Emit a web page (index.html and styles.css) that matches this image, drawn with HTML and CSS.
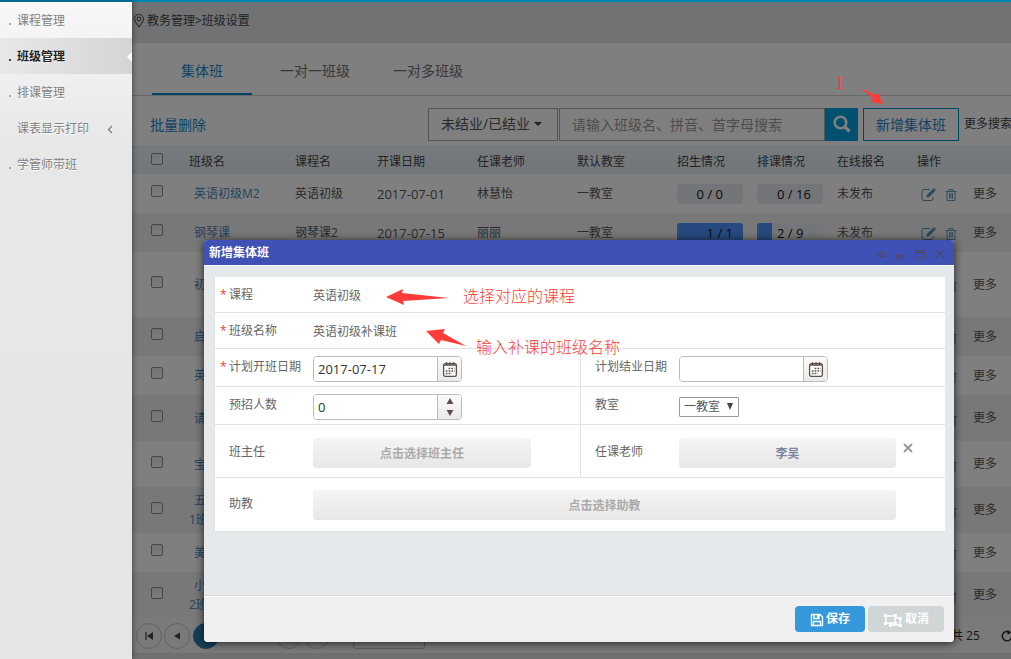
FILE: index.html
```html
<!DOCTYPE html>
<html lang="zh-CN">
<head>
<meta charset="utf-8">
<title>班级设置</title>
<link rel="stylesheet" href="styles.css">
</head>
<body>
<svg class="defs" aria-hidden="true">
  <symbol id="i-edit" viewBox="0 0 16 14"><path d="M9 1.500H3a2 2 0 0 0-2 2v7a2 2 0 0 0 2 2h7a2 2 0 0 0 2-2V9" fill="none" stroke="currentColor"/><path d="M5.500 9.500l.5-2.700L12 1l2 2-5.700 6z" fill="currentColor"/><path d="M12.500 .5l2 2" stroke="currentColor" stroke-width="1.200"/></symbol>
  <symbol id="i-trash" viewBox="0 0 12 14"><path d="M.5 3.500h11M4 3V1.500h4V3M2 3.500v9h8v-9M4.500 5v5.500M6 5v5.500M7.500 5v5.500" fill="none" stroke="currentColor" stroke-width=".9"/></symbol>
  <symbol id="i-cal" viewBox="0 0 16 16"><rect x="1.600" y="2.600" width="12.800" height="12.800" rx="2" fill="#fff" stroke="#5d5048" stroke-width="1.300"/><path d="M2 4h12" stroke="#5d5048" stroke-width="1.300"/><path d="M4.500 1v3M8 1v3M11.500 1v3" stroke="#5d5048" stroke-width="1.200"/><path d="M6.600 7.500h6M3.800 10h9M3.800 12.500h6" stroke="#5d5048" stroke-width="1.600" stroke-dasharray="1.700 1.100"/></symbol>
</svg>
<div class="app">
  <nav class="side">
    <a class="item" href="#">课程管理</a>
    <a class="item active" href="#">班级管理</a>
    <a class="item" href="#">排课管理</a>
    <a class="item plain" href="#">课表显示打印<svg class="chev" viewBox="0 0 6 8"><path d="M5 .5L1.500 4 5 7.500" fill="none" stroke="#777" stroke-width="1.200"/></svg></a>
    <a class="item" href="#">学管师带班</a>
  </nav>
  <main class="main">
    <header class="crumb"><svg class="pin" viewBox="0 0 12 16"><path d="M6 14C4 11 1.500 9 1.500 6a4.500 4.500 0 0 1 9 0c0 3-2.500 5-4.500 8z" fill="none" stroke="#666" stroke-width="1.200"/><circle cx="6" cy="6" r="1.800" fill="none" stroke="#666" stroke-width="1.200"/></svg><span>教务管理&gt;班级设置</span></header>
    <section class="panel">
      <div class="tabs">
        <button class="tab on">集体班</button><button class="tab">一对一班级</button><button class="tab">一对多班级</button>
      </div>
      <div class="tools">
        <a class="bulk" href="#">批量删除</a>
        <button class="state">未结业/已结业<i class="caret"></i></button>
        <input class="query" type="text" aria-label="搜索" placeholder="请输入班级名、拼音、首字母搜索">
        <button class="find" aria-label="搜索"><svg viewBox="0 0 18 18"><circle cx="7.500" cy="7.500" r="5.800" fill="none" stroke="#fff" stroke-width="2.600"/><path d="M12 12l4.500 4.500" stroke="#fff" stroke-width="3.200"/></svg></button>
        <button class="add">新增集体班</button>
        <a class="moresearch" href="#">更多搜索</a>
      </div>
      <table class="grid">
        <colgroup><col class="c-check"><col class="c-name"><col class="c-course"><col class="c-wide"><col class="c-wide"><col class="c-wide"><col class="c-bar"><col class="c-bar"><col class="c-bar"><col></colgroup>
        <thead><tr><th><input type="checkbox" aria-label="全选"></th><th>班级名</th><th>课程名</th><th>开课日期</th><th>任课老师</th><th>默认教室</th><th>招生情况</th><th>排课情况</th><th>在线报名</th><th>操作</th></tr></thead>
        <tbody>
          <tr><td><input type="checkbox" aria-label="选择"></td><td><a class="name" href="#">英语初级M2</a></td><td>英语初级</td><td class="date">2017-07-01</td><td>林慧怡</td><td>一教室</td><td><div class="bar">0 / 0</div></td><td><div class="bar">0 / 16</div></td><td>未发布</td><td><div class="ops"><svg class="edit"><use href="#i-edit"/></svg><svg class="trash"><use href="#i-trash"/></svg><a href="#">更多</a></div></td></tr>
          <tr><td><input type="checkbox" aria-label="选择"></td><td><a class="name" href="#">钢琴课</a></td><td>钢琴课2</td><td class="date">2017-07-15</td><td>丽丽</td><td>一教室</td><td><div class="bar full">1 / 1</div></td><td><div class="bar part">2 / 9</div></td><td>未发布</td><td><div class="ops"><svg class="edit"><use href="#i-edit"/></svg><svg class="trash"><use href="#i-trash"/></svg><a href="#">更多</a></div></td></tr>
          <tr class="xl"><td><input type="checkbox" aria-label="选择"></td><td><a class="name" href="#">初</a></td><td colspan="7"></td><td><div class="ops"><svg class="edit"><use href="#i-edit"/></svg><svg class="trash"><use href="#i-trash"/></svg><a href="#">更多</a></div></td></tr>
          <tr><td><input type="checkbox" aria-label="选择"></td><td><a class="name" href="#">启</a></td><td colspan="7"></td><td><div class="ops"><svg class="edit"><use href="#i-edit"/></svg><svg class="trash"><use href="#i-trash"/></svg><a href="#">更多</a></div></td></tr>
          <tr><td><input type="checkbox" aria-label="选择"></td><td><a class="name" href="#">英</a></td><td colspan="7"></td><td><div class="ops"><svg class="edit"><use href="#i-edit"/></svg><svg class="trash"><use href="#i-trash"/></svg><a href="#">更多</a></div></td></tr>
          <tr class="lg"><td><input type="checkbox" aria-label="选择"></td><td><a class="name" href="#">请</a></td><td colspan="7"></td><td><div class="ops"><svg class="edit"><use href="#i-edit"/></svg><svg class="trash"><use href="#i-trash"/></svg><a href="#">更多</a></div></td></tr>
          <tr class="lg"><td><input type="checkbox" aria-label="选择"></td><td><a class="name" href="#">宝</a></td><td colspan="7"></td><td><div class="ops"><svg class="edit"><use href="#i-edit"/></svg><svg class="trash"><use href="#i-trash"/></svg><a href="#">更多</a></div></td></tr>
          <tr class="lg"><td><input type="checkbox" aria-label="选择"></td><td><a class="name" href="#">五<br>1班</a></td><td colspan="7"></td><td><div class="ops"><svg class="edit"><use href="#i-edit"/></svg><svg class="trash"><use href="#i-trash"/></svg><a href="#">更多</a></div></td></tr>
          <tr><td><input type="checkbox" aria-label="选择"></td><td><a class="name" href="#">美</a></td><td colspan="7"></td><td><div class="ops"><svg class="edit"><use href="#i-edit"/></svg><svg class="trash"><use href="#i-trash"/></svg><a href="#">更多</a></div></td></tr>
          <tr class="lg"><td><input type="checkbox" aria-label="选择"></td><td><a class="name" href="#">小<br>2班</a></td><td colspan="7"></td><td><div class="ops"><svg class="edit"><use href="#i-edit"/></svg><svg class="trash"><use href="#i-trash"/></svg><a href="#">更多</a></div></td></tr>
        </tbody>
      </table>
      <div class="pager">
        <button class="pg" aria-label="首页"><svg viewBox="0 0 8 8"><path d="M1 0v8" stroke="#444" stroke-width="1.200"/><path d="M8 0v8L2 4z" fill="#444"/></svg></button>
        <button class="pg" aria-label="上一页"><svg viewBox="0 0 8 8"><path d="M7 .5v7L1 4z" fill="#444"/></svg></button>
        <button class="pg cur" aria-label="第一页"></button>
        <button class="pg next" aria-label="下一页"></button>
        <button class="pg" aria-label="末页"></button>
        <button class="size" aria-label="每页条数"></button>
        <span class="total">共 25</span>
        <svg class="reload" viewBox="0 0 12 12"><path d="M9 2.500A4.700 4.700 0 1 0 10.700 6" fill="none" stroke="#333" stroke-width="1.500"/><path d="M6.500 0l4 2.500-4 2.500z" fill="#333"/></svg>
      </div>
    </section>
    <div class="shade"></div>
  </main>
</div>

<section class="dialog" role="dialog" aria-labelledby="dlg-title">
  <header class="dhead"><h1 id="dlg-title">新增集体班</h1>
    <svg class="wins" viewBox="0 0 74 12" fill="none" stroke="#4e4a66" stroke-width="1.100"><path d="M2 6.500h4M6 3v7M6 4.500h4M6 8.500h4M10.500 4v5"/><path d="M22 7.500h8M22 9.500h8" stroke-width="1.500"/><rect x="41.500" y="2.500" width="9" height="7.500" rx="1"/><path d="M42 4.500h8"/><path d="M62 2l8 8M70 2l-8 8"/></svg>
  </header>
  <form class="dbody">
    <div class="form">
      <div class="row"><div class="cell"><span class="label req">课程</span><span>英语初级</span></div></div>
      <div class="row"><div class="cell"><span class="label req">班级名称</span><span>英语初级补课班</span></div></div>
      <div class="row two">
        <div class="cell"><label class="label req" for="start">计划开班日期</label><div class="field"><input id="start" type="text" value="2017-07-17"><button type="button" aria-label="选择日期"><svg class="cal"><use href="#i-cal"/></svg></button></div></div>
        <div class="cell"><label class="label" for="end">计划结业日期</label><div class="field"><input id="end" type="text"><button type="button" aria-label="选择日期"><svg class="cal"><use href="#i-cal"/></svg></button></div></div>
      </div>
      <div class="row two">
        <div class="cell"><label class="label" for="count">预招人数</label><div class="field"><input id="count" type="text" value="0"><button type="button" aria-label="调整人数"><svg class="spin" viewBox="0 0 8 18"><path d="M4 0l3.500 6h-7zM4 18l3.500-6h-7z" fill="#5d5048"/></svg></button></div></div>
        <div class="cell"><label class="label" for="room">教室</label><div class="pick"><select id="room"><option>一教室</option></select><i class="down"></i></div></div>
      </div>
      <div class="row two tall">
        <div class="cell"><span class="label">班主任</span><button type="button" class="choose">点击选择班主任</button></div>
        <div class="cell"><span class="label">任课老师</span><button type="button" class="choose chosen">李吴</button><button type="button" class="clear" aria-label="清除"><svg viewBox="0 0 10 10"><path d="M1 1l8 8M9 1L1 9" stroke="#999" stroke-width="1.900"/></svg></button></div>
      </div>
      <div class="row tall"><div class="cell"><span class="label">助教</span><button type="button" class="choose">点击选择助教</button></div></div>
    </div>
  </form>
  <footer class="dfoot">
    <button class="btn save"><svg viewBox="0 0 14 14"><path d="M1.500 1.500H10L12.500 4v8.500h-11zM4 2v3.500h5V2M3.500 12V8.500h7V12" fill="none" stroke="#fff" stroke-width="1.300"/><path d="M7 2h2v3H7z" fill="#fff"/></svg>保存</button>
    <button class="btn cancel"><svg class="group" viewBox="0 0 20 15"><path d="M3 3h9v7H3zM12 5h5v7H7v-2" fill="none" stroke="#fff" stroke-width="1.400"/><path d="M1 1h3v3H1zM11 1h3v3h-3zM1 9h3v3H1zM11 9h3v3h-3zM16 4h3v3h-3zM16 11h3v3h-3zM6 11h3v3H6z" fill="#fff"/></svg>取消</button>
  </footer>
</section>

<div class="note n1">1</div>
<div class="note n2">选择对应的课程</div>
<div class="note n3">输入补课的班级名称</div>
<svg class="arrow a1" viewBox="0 0 24 17"><path d="M1 0l14 7 3-2 5 11-12-2 2-3z" fill="#fd3b38"/></svg>
<svg class="arrow a2" viewBox="0 0 63 16"><path d="M0 8L17 0l-1 4 47 5-46 3 1 4z" fill="#fd3b38"/></svg>
<svg class="arrow a3" viewBox="0 0 40 18"><path d="M0 2L19 0l-2 4 23 13-25-6-2 4z" fill="#fd3b38"/></svg>
</body>
</html>
```
FILE: styles.css
```css
* { box-sizing: border-box; }
body { margin: 0; font: 12px/18px "Open Sans", "Noto Sans CJK SC", sans-serif; color: #555; }
button, input, select { font: inherit; color: inherit; margin: 0; padding: 0; }
button { border: 0; background: none; }
a { color: inherit; text-decoration: none; }
.defs { display: none; }
.app { display: flex; height: 100vh; overflow: hidden; }

.side { flex: 0 0 132px; z-index: 1; border-top: 2px solid #006a91; background: linear-gradient(#f8f8f8, #e8e7e7 150px, #e6e5e5); box-shadow: 1px 0 5px rgba(0,0,0,.4); }
.item { position: relative; display: flex; align-items: center; height: 36px; padding: 2px 0 0 8px; color: #808080; text-shadow: 0 1px #fff; }
.item::before { content: ""; width: 2px; height: 2px; margin: 5px 6px 0 1px; background: #aaa; }
.item.plain::before { background: none; }
.active { color: #222; font-weight: bold; background: linear-gradient(90deg, #e9e8e8, #d5d5d5); }
.item.active::before { background: #444; }
.active::after { content: ""; position: absolute; right: 0; top: 14px; border: 5px solid transparent; border-left: 0; border-right-color: #fff; }
.chev { width: 6px; height: 9px; margin-left: 18px; }

.main { position: relative; flex: 1; min-width: 0; overflow: hidden; border-top: 2px solid #0086b5; background: #dfe1e4; }
.shade { position: absolute; inset: 0; background: rgba(0,0,0,.5); }
.crumb { display: flex; align-items: center; gap: 2px; height: 41px; padding: 0 0 4px 1px; background: #e3e5e8; color: #444; }
.pin { width: 12px; height: 16px; }
.panel { border-radius: 4px 0 0; background: #fff; border-bottom: 1px solid #ddd; }
.tabs { display: flex; gap: 13px; height: 53px; padding-left: 20px; border-bottom: 1px solid #d0d0d0; }
.tab { width: 100px; font-size: 14px; color: #707070; border-bottom: 2px solid transparent; border-top: 6px solid transparent; }
.on { color: #2087cc; border-bottom-color: #0088cc; }
.tools { display: flex; align-items: center; height: 50px; padding: 6px 0 0 18px; white-space: nowrap; font-size: 14px; overflow: hidden; }
.tools > * { flex-shrink: 0; }
.bulk { color: #2087cc; width: 278px; padding-top: 2px; }
.state { width: 130px; height: 33px; padding-right: 3px; border: 1px solid #aaa; }
.caret { display: inline-block; margin-left: 4px; vertical-align: 3px; border: 4px solid transparent; border-top-color: #444; border-bottom: 0; }
.query { width: 266px; height: 33px; margin-left: 1px; padding-left: 12px; border: 1px solid #aaa; background: #fff; }
.query::placeholder { color: #999; opacity: 1; }
.find { display: flex; align-items: center; justify-content: center; width: 33px; height: 33px; background: #00a0e0; }
.find svg { width: 18px; height: 18px; }
.add { width: 96px; height: 33px; margin: 0 5px; padding-top: 2px; border: 1px solid #0090d0; color: #2087cc; }
.moresearch { font-size: 12px; color: #444; }

.grid { width: 100%; table-layout: fixed; border-spacing: 0; }
.c-check { width: 50px; } .c-name { width: 106px; } .c-course { width: 82px; } .c-wide { width: 100px; } .c-bar { width: 80px; }
th, td { padding: 0 0 0 7px; text-align: left; vertical-align: middle; white-space: nowrap; }
th { height: 28px; padding-top: 2px; font-weight: normal; background: linear-gradient(#edf4f8, #e9eff5); border-top: 1px solid #dde3e8; color: #444; }
td { height: 39px; }
.xl td { height: 65px; } .lg td { height: 46px; }
tbody tr:nth-child(even) { background: #f0f0f0; }
.grid input { appearance: none; display: block; width: 12px; height: 12px; margin: 0 0 5px 12px; border: 1px solid #8c8c8c; border-radius: 2px; background: linear-gradient(#e8e8e8, #f8f8f8); }
.name { display: block; text-indent: 5px; color: #4a86b8; line-height: 19px; }
.date { font-size: 13px; }
.bar { width: 66px; height: 20px; padding-left: 20px; border-radius: 3px; background: #e8ebf0; font-size: 13px; line-height: 20px; color: #111; }
td:nth-child(7) .bar { text-align: right; padding: 0 20px 0 0; }
td:nth-child(7) .full { padding-right: 10px; }
.full { background: #4d94ff; }
.part { background: linear-gradient(90deg, #4d94ff 15px, #e8ebf0 15px); }
.ops { display: flex; align-items: center; padding-left: 4px; color: #5090b8; }
.ops a { margin-left: 16px; color: #555; }
.edit { width: 16px; height: 14px; margin-top: 2px; } .trash { width: 12px; height: 14px; margin: 3px 0 0 8px; }

.pager { display: flex; align-items: center; gap: 2px; height: 35px; padding-left: 4px; background: #f4f4f4; }
.pg { display: flex; flex: 0 0 26px; height: 26px; align-items: center; justify-content: center; border: 1px solid #c5c5c5; border-radius: 50%; }
.pg svg { width: 8px; height: 8px; }
.cur { background: #2a80b0; border-color: #2a80b0; margin-left: 1px; }
.next { margin-left: 55px; }
.size { flex: 0 0 72px; height: 26px; margin-left: 21px; border: 1px solid #bbb; border-radius: 3px; }
.total { margin-left: auto; width: 48px; font-size: 12px; white-space: nowrap; color: #333; }
.reload { width: 12px; height: 12px; margin-right: -2px; }

.dialog { position: absolute; z-index: 2; left: 204px; top: 240px; width: 750px; display: flex; flex-direction: column; border-radius: 4px; overflow: hidden; background: #e5e9eb; color: #666; box-shadow: 0 1px 8px rgba(0,0,0,.75); }
.dhead { display: flex; align-items: center; justify-content: space-between; height: 26px; padding: 0 6px 0 5px; background: #3f51b5; border-bottom: 1px solid #fff; }
.dhead h1 { margin: 0; font-size: 12px; line-height: 24px; color: #fff; font-weight: bold; }
.wins { width: 74px; height: 12px; margin-top: 2px; }
.dbody { min-height: 329px; padding: 11px 9px 0 10px; }
.form { background: #fff; border-bottom: 1px solid #e2e2e2; border-left: 1px solid #e2e2e2; }
.row { display: grid; border-bottom: 1px solid #e2e2e2; min-height: 36px; }
.row:last-child { border-bottom: 0; }
.two { grid-template-columns: 1fr 1fr; min-height: 38px; }
.two .cell + .cell { border-left: 1px solid #e2e2e2; }
.tall { min-height: 53px; }
.cell { display: flex; align-items: center; padding: 2px 49px 0 0; }
.two .cell { padding-right: 49px; }
.two.tall .cell { padding-top: 4px; }
.row:last-child .cell { padding-top: 0; }
.label { position: relative; flex: 0 0 98px; padding: 0 0 2px 14px; }
.two .label { padding-bottom: 3px; }
.req::before { content: "*"; position: absolute; left: 5px; color: #f33; }
.field { display: flex; width: 149px; height: 26px; border: 1px solid #bbb; border-radius: 4px; overflow: hidden; }
.field input { flex: 1; min-width: 0; padding-left: 4px; border: 0; font-size: 13px; color: #333; }
.field button { display: flex; align-items: center; justify-content: center; width: 24px; border-left: 1px solid #bbb; background: linear-gradient(#fafafa, #eaeaea); }
.cal { width: 16px; height: 16px; }
.spin { width: 8px; height: 18px; }
.pick { position: relative; }
.pick select { appearance: none; display: block; width: 60px; height: 20px; padding-left: 4px; border: 1px solid #999; border-radius: 1px; background: #fff; color: #555; }
.down { position: absolute; right: 6px; top: 6px; border: 3px solid transparent; border-top: 7px solid #444; border-bottom: 0; pointer-events: none; }
.choose { flex: 1; height: 30px; padding-top: 2px; border-radius: 4px; background: linear-gradient(#f5f5f5, #e7e7e7); font-weight: bold; color: #aaa; }
.chosen { color: #7b86a0; }
.clear { width: 10px; height: 10px; margin: 0 -17px 10px 7px; line-height: 0; }
.clear svg { width: 10px; height: 10px; }
.dfoot { display: flex; justify-content: flex-end; gap: 3px; padding: 10px 10px 10px; border-top: 1px solid #d9d9d9; background: #f0f0f0; box-shadow: inset 0 1px #fff; }
.btn { display: flex; align-items: center; justify-content: center; gap: 2px; width: 70px; height: 26px; border-radius: 4px; color: #fff; font-weight: bold; }
.btn svg { width: 14px; height: 14px; margin-top: 2px; }
.save { background: #3498db; }
.cancel { width: 76px; background: #d0d5d6; }
.btn .group { width: 20px; height: 15px; }

.note { position: absolute; z-index: 3; font: 16px/20px "Liberation Sans", "Noto Sans CJK SC", sans-serif; font-weight: 300; color: #fd3b38; white-space: nowrap; }
.n1 { left: 835px; top: 73px; font-size: 18px; font-family: "Liberation Serif", serif; }
.n2 { left: 463px; top: 287px; }
.n3 { left: 476px; top: 338px; }
.arrow { position: absolute; z-index: 3; }
.a1 { left: 860px; top: 88px; width: 24px; height: 17px; }
.a2 { left: 386px; top: 289px; width: 63px; height: 16px; }
.a3 { left: 426px; top: 329px; width: 40px; height: 18px; }
```
